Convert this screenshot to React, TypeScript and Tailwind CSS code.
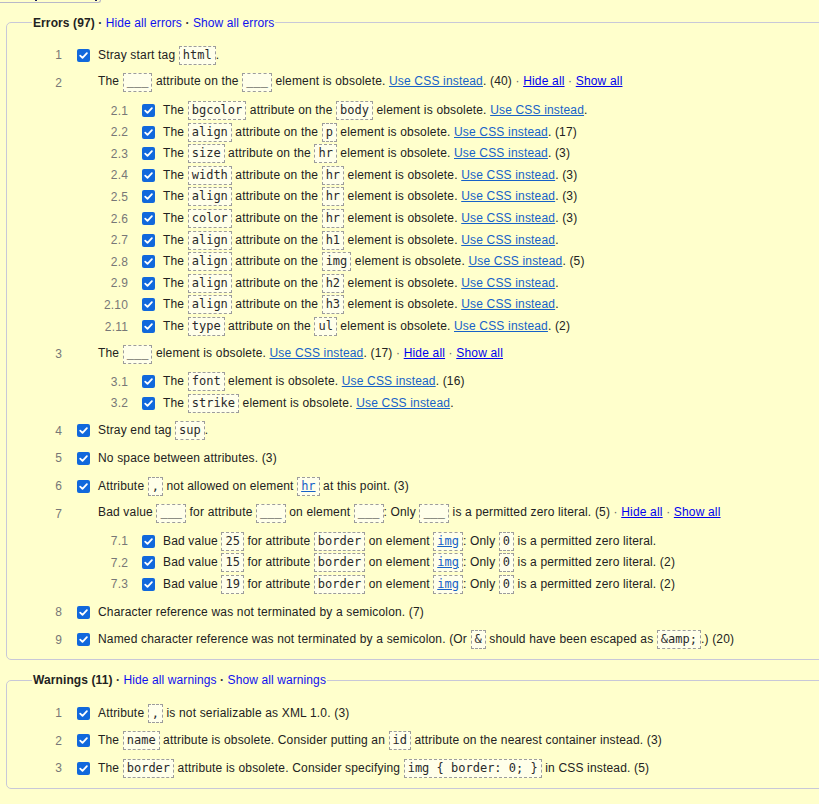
import React from "react";

type Seg =
  | string
  | { c: string; link?: boolean }
  | { a: string }
  | { sep: true }
  | { h: string };

const C = (c: string, link = false): Seg => ({ c, link });
const USE: Seg = { a: "Use CSS instead" };
const SEP: Seg = { sep: true };
const HIDE: Seg = { h: "Hide all" };
const SHOW: Seg = { h: "Show all" };

type Item = { n: string; cb: boolean; segs: Seg[]; subs?: Item[] };

function Check() {
  return (
    <span className="flex h-[13px] w-[13px] items-center justify-center rounded-[2px] bg-[#1168dc]">
      <svg width="11" height="11" viewBox="0 0 11 11" fill="none">
        <path d="M2.2 5.6 L4.5 7.9 L8.9 3.2" stroke="#fff" strokeWidth="1.8" strokeLinecap="round" strokeLinejoin="round" />
      </svg>
    </span>
  );
}

function Segs({ segs }: { segs: Seg[] }) {
  return (
    <>
      {segs.map((s, i) => {
        if (typeof s === "string") return <React.Fragment key={i}>{s}</React.Fragment>;
        if ("c" in s) {
          const blank = s.c === "___";
          return (
            <code
              key={i}
              className={`inline-block rounded-none border border-dashed border-[#9c9c9c] bg-[#ffffea] px-[3px] font-['DejaVu_Sans_Mono',monospace] text-[12px] tracking-normal text-[#2a2a2a] ${
                blank ? "pb-[3px] leading-[14px]" : "leading-[17px]"
              }`}
            >
              {s.link ? <span className="text-[#1762c8] underline">{s.c}</span> : s.c}
            </code>
          );
        }
        if ("a" in s)
          return (
            <a key={i} className="text-[#1762c8] underline">
              {s.a}
            </a>
          );
        if ("h" in s)
          return (
            <a key={i} className="text-[#0000ee] underline">
              {s.h}
            </a>
          );
        return (
          <span key={i} className="text-[#666]">
            {" · "}
          </span>
        );
      })}
    </>
  );
}

function Row({ item, sub }: { item: Item; sub?: boolean }) {
  return (
    <div className="flex h-[21.6px] items-center">
      <span className="w-[30px] shrink-0 text-right text-[#777]">{item.n}</span>
      <span className={`${sub ? "ml-[14px]" : "ml-[15px]"} h-[13px] w-[13px] shrink-0`}>{item.cb && <Check />}</span>
      <div className="ml-[8px] whitespace-pre">
        <Segs segs={item.segs} />
      </div>
    </div>
  );
}

function List({ items }: { items: Item[] }) {
  return (
    <ol>
      {items.map((it) => (
        <li key={it.n} className="py-[3px]">
          <Row item={it} />
          {it.subs && (
            <ol className="ml-[66px] mt-[6px]">
              {it.subs.map((s) => (
                <li key={s.n}>
                  <Row item={s} sub />
                </li>
              ))}
            </ol>
          )}
        </li>
      ))}
    </ol>
  );
}

const attrSub = (n: string, attr: string, el: string, count: string, link = false): Item => ({
  n,
  cb: true,
  segs: ["The ", C(attr), " attribute on the ", C(el, link), " element is obsolete. ", USE, count ? `. ${count}` : "."],
});

const errors: Item[] = [
  { n: "1", cb: true, segs: ["Stray start tag ", C("html"), "."] },
  {
    n: "2",
    cb: false,
    segs: ["The ", C("___"), " attribute on the ", C("___"), " element is obsolete. ", USE, ". (40)", SEP, HIDE, SEP, SHOW],
    subs: [
      attrSub("2.1", "bgcolor", "body", ""),
      attrSub("2.2", "align", "p", "(17)"),
      attrSub("2.3", "size", "hr", "(3)"),
      attrSub("2.4", "width", "hr", "(3)"),
      attrSub("2.5", "align", "hr", "(3)"),
      attrSub("2.6", "color", "hr", "(3)"),
      attrSub("2.7", "align", "h1", ""),
      attrSub("2.8", "align", "img", "(5)"),
      attrSub("2.9", "align", "h2", ""),
      attrSub("2.10", "align", "h3", ""),
      attrSub("2.11", "type", "ul", "(2)"),
    ],
  },
  {
    n: "3",
    cb: false,
    segs: ["The ", C("___"), " element is obsolete. ", USE, ". (17)", SEP, HIDE, SEP, SHOW],
    subs: [
      { n: "3.1", cb: true, segs: ["The ", C("font"), " element is obsolete. ", USE, ". (16)"] },
      { n: "3.2", cb: true, segs: ["The ", C("strike"), " element is obsolete. ", USE, "."] },
    ],
  },
  { n: "4", cb: true, segs: ["Stray end tag ", C("sup"), "."] },
  { n: "5", cb: true, segs: ["No space between attributes. (3)"] },
  { n: "6", cb: true, segs: ["Attribute ", C(","), " not allowed on element ", C("hr", true), " at this point. (3)"] },
  {
    n: "7",
    cb: false,
    segs: [
      "Bad value ",
      C("___"),
      " for attribute ",
      C("___"),
      " on element ",
      C("___"),
      ": Only ",
      C("___"),
      " is a permitted zero literal. (5)",
      SEP,
      HIDE,
      SEP,
      SHOW,
    ],
    subs: [
      { n: "7.1", cb: true, segs: ["Bad value ", C("25"), " for attribute ", C("border"), " on element ", C("img", true), ": Only ", C("0"), " is a permitted zero literal."] },
      { n: "7.2", cb: true, segs: ["Bad value ", C("15"), " for attribute ", C("border"), " on element ", C("img", true), ": Only ", C("0"), " is a permitted zero literal. (2)"] },
      { n: "7.3", cb: true, segs: ["Bad value ", C("19"), " for attribute ", C("border"), " on element ", C("img", true), ": Only ", C("0"), " is a permitted zero literal. (2)"] },
    ],
  },
  { n: "8", cb: true, segs: ["Character reference was not terminated by a semicolon. (7)"] },
  {
    n: "9",
    cb: true,
    segs: ["Named character reference was not terminated by a semicolon. (Or ", C("&"), " should have been escaped as ", C("&amp;"), ".) (20)"],
  },
];

const warnings: Item[] = [
  { n: "1", cb: true, segs: ["Attribute ", C(","), " is not serializable as XML 1.0. (3)"] },
  { n: "2", cb: true, segs: ["The ", C("name"), " attribute is obsolete. Consider putting an ", C("id"), " attribute on the nearest container instead. (3)"] },
  { n: "3", cb: true, segs: ["The ", C("border"), " attribute is obsolete. Consider specifying ", C("img { border: 0; }"), " in CSS instead. (5)"] },
];

function Group({ title, kind, items, top }: { title: string; kind: string; items: Item[]; top: string }) {
  return (
    <fieldset className={`${top} ml-[6px] mr-[-24px] rounded-[5px] border border-[#c8c8d8] pb-[6px] pl-[25px] pt-[12px]`}>
      <legend className="px-[1px] text-[12px] leading-[14px] tracking-[0.1px]">
        <b className="font-bold text-[#222]">{title}</b>
        <span className="font-bold text-[#333]">{" · "}</span>
        <a className="text-[#1010ee]">Hide all {kind}</a>
        <span className="font-bold text-[#333]">{" · "}</span>
        <a className="text-[#1010ee]">Show all {kind}</a>
      </legend>
      <List items={items} />
    </fieldset>
  );
}

export default function App() {
  return (
    <div className="min-h-screen w-full overflow-hidden bg-[#ffffcc] font-['Liberation_Sans',Arial,sans-serif] text-[12px] leading-[14px] tracking-[0.17px] text-[#222]">
      <div className="flex h-[3px] w-[101px] rounded-br-[4px] border-b border-r border-[#b8b8c8]">
        <span className="ml-[35px] h-[1px] w-[2px] bg-[#1a1f5e]" />
        <span className="ml-[58px] h-[1px] w-[2px] bg-[#1a1f5e]" />
      </div>
      <Group title="Errors (97)" kind="errors" items={errors} top="mt-[12.6px]" />
      <Group title="Warnings (11)" kind="warnings" items={warnings} top="mt-[13px]" />
    </div>
  );
}
